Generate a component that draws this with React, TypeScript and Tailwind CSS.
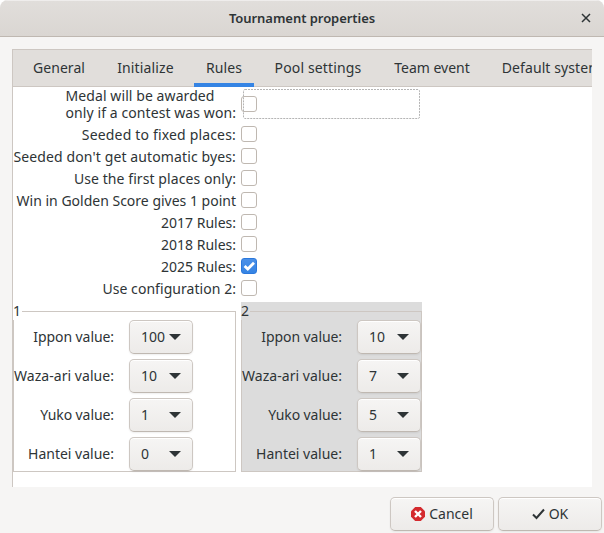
import React from 'react';
import { clsx } from 'clsx';

const tabs = [
  { name: 'General', width: 'w-[84px]', text: 'tracking-[0.05px]' },
  { name: 'Initialize', width: 'w-[89px]', text: 'tracking-[0.15px]' },
  { name: 'Rules', width: 'w-[68px]', text: 'tracking-[0.1px]' },
  { name: 'Pool settings', width: 'w-[120px]', text: 'tracking-[0.15px]' },
  { name: 'Team event', width: 'w-[108px]', text: 'tracking-[0px]' },
  { name: 'Default systems', width: 'w-[138px]', text: 'tracking-[0.1px]' },
];

const options = [
  { label: 'Seeded to fixed places:', checked: false, text: 'tracking-[0.17px]' },
  { label: "Seeded don't get automatic byes:", checked: false, text: 'tracking-[0.12px]' },
  { label: 'Use the first places only:', checked: false, text: 'tracking-[0.08px]' },
  { label: 'Win in Golden Score gives 1 point', checked: false, text: 'tracking-[0px]' },
  { label: '2017 Rules:', checked: false, text: 'tracking-[0px]' },
  { label: '2018 Rules:', checked: false, text: 'tracking-[0px]' },
  { label: '2025 Rules:', checked: true, text: 'tracking-[0px]' },
  { label: 'Use configuration 2:', checked: false, text: 'tracking-[0.05px]' },
];

const valueLabels = [
  { label: 'Ippon value:', text: 'tracking-[-0.08px]' },
  { label: 'Waza-ari value:', text: 'tracking-[0.05px]' },
  { label: 'Yuko value:', text: 'tracking-[-0.08px]' },
  { label: 'Hantei value:', text: 'tracking-[0px]' },
];

const buttonStyle =
  'flex h-[34px] items-center rounded-[5px] border border-[#cdc7c2] border-b-[#bfb8b1] bg-gradient-to-b from-[#f6f5f4] to-[#edebe9] shadow-[inset_0_1px_#ffffff,0_1px_2px_rgba(0,0,0,0.07)]';

const CheckBox: React.FC<{ checked?: boolean }> = ({ checked }) => (
  <span
    className={clsx(
      'flex size-4 shrink-0 items-center justify-center rounded-[3px] border',
      checked ? 'border-[#2b78dc] bg-gradient-to-b from-[#4a90e8] to-[#3584e4]' : 'border-[#bfb8b1] bg-white'
    )}
  >
    {checked && (
      <svg width="14" height="14" viewBox="0 0 14 14" className="shrink-0">
        <path d="M2.6 6.9 L5.8 10 L12 3.7" fill="none" stroke="#fff" strokeWidth="2.8" />
      </svg>
    )}
  </span>
);

const ValueFrame: React.FC<{ title: string; values: string[]; shaded?: boolean }> = ({ title, values, shaded }) => (
  <div className={clsx('h-[170px] pt-[9px]', shaded ? 'w-[181px] bg-[#dcdcdc]' : 'w-[223px]')}>
    <div className="relative h-[161px] border border-[#cdc7c2] pt-2">
      <span
        className={clsx(
          'absolute -left-px -top-[10px] w-[9px] text-[14px] leading-[18px]',
          shaded ? 'bg-[#dcdcdc]' : 'bg-white'
        )}
      >
        {title}
      </span>
      <div className="flex flex-col gap-[5px]">
        {values.map((value, i) => (
          <div key={valueLabels[i].label} className="flex h-[34px] items-center gap-[15px]">
            <span className={clsx('w-[100px] shrink-0 whitespace-nowrap text-right', valueLabels[i].text)}>
              {valueLabels[i].label}
            </span>
            <button className={clsx(buttonStyle, 'w-16 shrink-0 justify-between pl-[11px] pr-[11px]')}>
              <span>{value}</span>
              <svg width="12" height="6" viewBox="0 0 12 6" className="shrink-0">
                <path d="M0 0H12L6 6Z" fill="#2e3436" />
              </svg>
            </button>
          </div>
        ))}
      </div>
    </div>
  </div>
);

export default function App() {
  return (
    <div className="h-[533px] w-[604px] overflow-hidden bg-white font-['Noto_Sans',sans-serif] text-[14px] leading-[18px] text-[#2e3436]">
      <div className="flex h-full flex-col overflow-hidden rounded-t-[8px] bg-[#f6f5f4]">
        {/* Title bar */}
        <div className="flex h-[37px] shrink-0 items-center border-b border-[#bfb8b1] bg-gradient-to-b from-[#e1dedb] to-[#dad6d2] shadow-[inset_0_1px_#efedec]">
          <span className="w-9" />
          <h1 className="flex-1 text-center text-[13px] font-semibold tracking-[-0.05px]">Tournament properties</h1>
          <button className="flex w-9 justify-center">
            <svg width="10" height="10" viewBox="0 0 10 10">
              <path d="M1 1L9 9M9 1L1 9" stroke="#2e3436" strokeWidth="1.5" />
            </svg>
          </button>
        </div>

        {/* Notebook */}
        <div className="ml-3 mr-3 mt-3 flex h-[438px] shrink-0 flex-col overflow-hidden border-l border-t border-[#cdc7c2] bg-white">
          <div className="flex h-[37px] shrink-0 border-b border-[#cdc7c2] bg-[#e1dedb] pl-1">
            {tabs.map((tab) => (
              <div
                key={tab.name}
                className={clsx(
                  'flex h-[37px] shrink-0 items-center justify-center whitespace-nowrap pb-0.5',
                  tab.width,
                  tab.text,
                  tab.name === 'Rules' && 'relative'
                )}
              >
                {tab.name}
                {tab.name === 'Rules' && <span className="absolute bottom-0 left-1 h-1 w-[60px] bg-[#3584e4]" />}
              </div>
            ))}
          </div>

          <div className="relative flex h-9 shrink-0">
            <div className="flex w-[223px] flex-col items-end leading-[17px]">
              <div className="whitespace-nowrap tracking-[0.08px]">
                <p>Medal will be awarded</p>
                <p>only if a contest was won:</p>
              </div>
            </div>
            <div className="ml-[5px] pt-[9px]">
              <CheckBox />
            </div>
            <svg width="177" height="30" className="absolute left-[230px] top-0.5">
              <rect
                x="0.5"
                y="0.5"
                width="176"
                height="29"
                rx="1.5"
                fill="none"
                stroke="#b4b4b4"
                strokeDasharray="2 1"
              />
            </svg>
          </div>

          {options.map((option) => (
            <label key={option.label} className="flex h-[22px] shrink-0 items-center gap-[5px]">
              <span className={clsx('flex w-[223px] justify-end whitespace-nowrap pt-0.5', option.text)}>
                {option.label}
              </span>
              <CheckBox checked={option.checked} />
            </label>
          ))}

          <div className="mt-[3px] flex gap-[5px]">
            <ValueFrame title="1" values={['100', '10', '1', '0']} />
            <ValueFrame title="2" values={['10', '7', '5', '1']} shaded />
          </div>
        </div>

        {/* Actions */}
        <div className="mt-[10px] flex justify-end gap-1 pr-0.5">
          <button className={clsx(buttonStyle, 'w-[104px] justify-center gap-1')}>
            <svg width="14" height="14" viewBox="0 0 14 14">
              <path d="M4.2 0H9.8L14 4.2V9.8L9.8 14H4.2L0 9.8V4.2Z" fill="#d42a2e" />
              <path d="M4 4L10 10M10 4L4 10" stroke="#fff" strokeWidth="2.4" />
            </svg>
            <span>Cancel</span>
          </button>
          <button className={clsx(buttonStyle, 'w-[104px] justify-center gap-1')}>
            <svg width="13" height="12" viewBox="0 0 13 12">
              <path d="M1 6.5L4.5 10L12 1.5" fill="none" stroke="#2e3436" strokeWidth="2" />
            </svg>
            <span>OK</span>
          </button>
        </div>
      </div>
    </div>
  );
}
